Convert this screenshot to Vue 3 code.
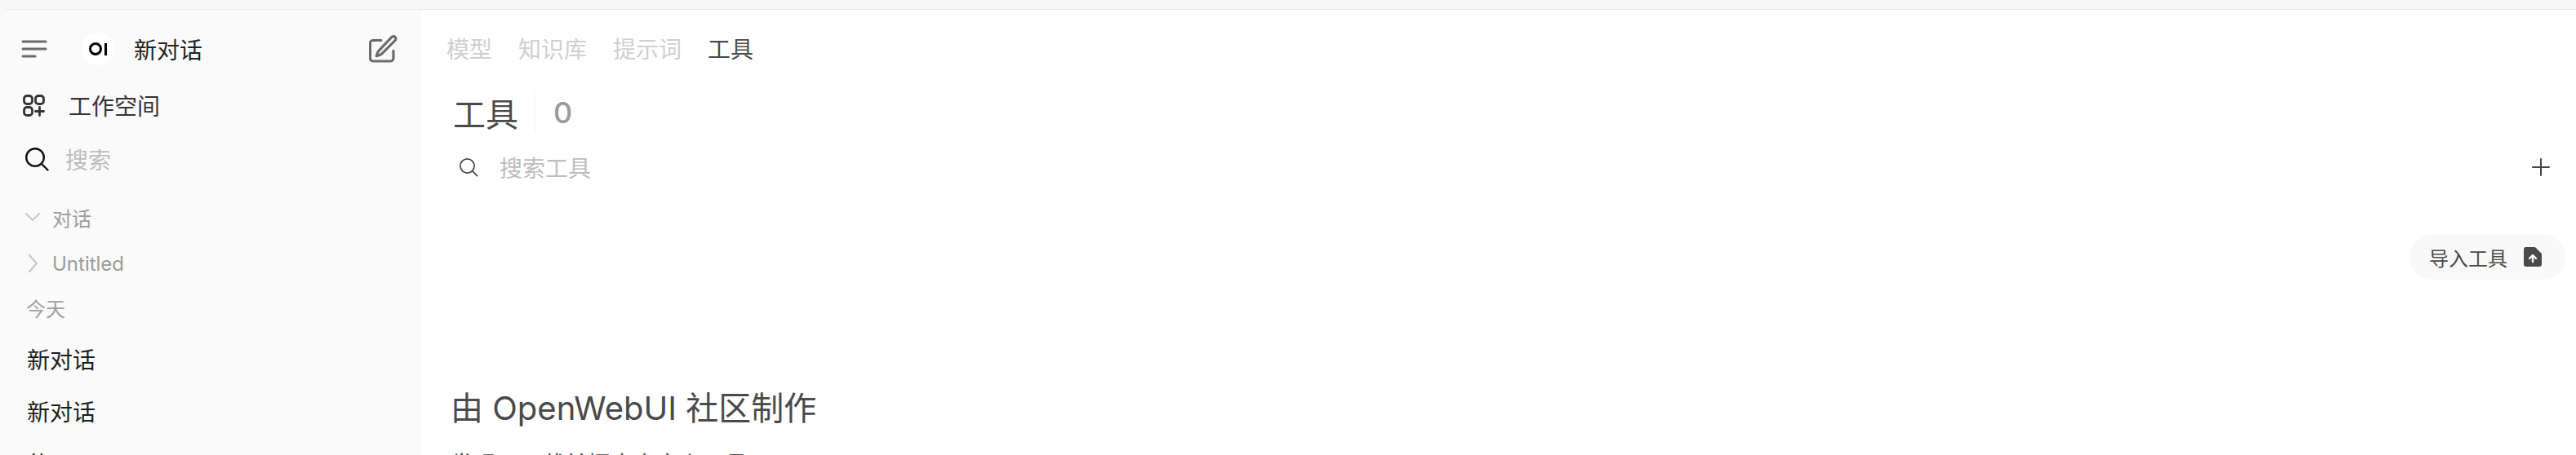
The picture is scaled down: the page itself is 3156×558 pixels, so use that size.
<template>
  <div class="window">
    <aside class="sidebar">
      <div class="top-row">
        <svg class="menu-icon" width="32" height="32" viewBox="0 0 32 32" fill="none" stroke="#6b6b6b" stroke-width="3" stroke-linecap="round">
          <path d="M2 7h28M2 16h28M2 25h15" />
        </svg>
        <div class="logo"><span class="logo-o"></span><span class="logo-i"></span></div>
        <span class="new-chat">新对话</span>
        <svg class="edit-icon" width="36" height="36" viewBox="0 0 24 24" fill="none" stroke="#6b6b6b" stroke-width="2.1" stroke-linecap="round" stroke-linejoin="round">
          <path d="M17.4 3.6l1.3-1.3a1.9 1.9 0 1 1 2.7 2.7L10.6 15.9a4.5 4.5 0 0 1-1.9 1.1L6.2 17.8l.8-2.5a4.5 4.5 0 0 1 1.1-1.9L17.4 3.6zM20 13.5v6.2a2.3 2.3 0 0 1-2.3 2.3H3.3A2.3 2.3 0 0 1 1 19.7V7.3A2.3 2.3 0 0 1 3.3 5H10" />
        </svg>
      </div>
      <div class="nav-row workspace">
        <svg width="27" height="27" viewBox="0 0 27 27" fill="none" stroke="#333" stroke-width="2.8" stroke-linecap="round">
          <rect x="1.5" y="1.5" width="10" height="10" rx="3.6" />
          <rect x="15.5" y="1.5" width="10" height="10" rx="3.6" />
          <rect x="1.5" y="15.5" width="10" height="10" rx="3.6" />
          <path d="M20.5 15.5v10M15.5 20.5h10" />
        </svg>
        <span>工作空间</span>
      </div>
      <div class="nav-row search">
        <svg width="30" height="30" viewBox="0 0 30 30" fill="none" stroke="#111" stroke-width="2.4" stroke-linecap="round">
          <circle cx="13" cy="13" r="10.8" />
          <path d="M21 21l7.5 7.5" />
        </svg>
        <span>搜索</span>
      </div>
      <div class="group-row chats">
        <svg width="20" height="20" viewBox="0 0 20 20" fill="none" stroke="#c8c8c8" stroke-width="2" stroke-linecap="round" stroke-linejoin="round">
          <path d="M2 6l8 8 8-8" />
        </svg>
        <span>对话</span>
      </div>
      <div class="group-row folder">
        <svg width="20" height="24" viewBox="0 0 20 24" fill="none" stroke="#c8c8c8" stroke-width="2.4" stroke-linecap="round" stroke-linejoin="round">
          <path d="M6 2l9 10-9 10" />
        </svg>
        <span>Untitled</span>
      </div>
      <div class="day">今天</div>
      <div v-for="(chat, i) in chats" :key="i" class="chat-item">{{ chat }}</div>
    </aside>

    <main class="content">
      <nav class="tabs">
        <span v-for="tab in tabs" :key="tab" class="tab" :class="{ active: tab === '工具' }">{{ tab }}</span>
      </nav>
      <div class="heading">
        <span class="title">工具</span>
        <span class="divider"></span>
        <span class="count">0</span>
      </div>
      <div class="search-bar">
        <svg width="24" height="24" viewBox="0 0 24 24" fill="none" stroke="#444" stroke-width="1.7" stroke-linecap="round">
          <circle cx="10.5" cy="10.5" r="8.6" />
          <path d="M16.6 16.6l6 6" />
        </svg>
        <span class="placeholder">搜索工具</span>
        <svg class="plus" width="22" height="22" viewBox="0 0 22 22" fill="none" stroke="#444" stroke-width="2" stroke-linecap="round">
          <path d="M11 1v20M1 11h20" />
        </svg>
      </div>
      <div class="actions">
        <button class="import-btn">
          <span>导入工具</span>
          <svg width="22" height="24" viewBox="0 0 22 24">
            <path fill="#4a4a4a" d="M3 0h10a2 2 0 0 1 1.4.6l6.9 7a2 2 0 0 1 .7 1.4v12a3 3 0 0 1-3 3H3a3 3 0 0 1-3-3V3a3 3 0 0 1 3-3z" />
            <path fill="none" stroke="#fff" stroke-width="2.4" stroke-linecap="round" stroke-linejoin="round" d="M11 18v-7M7 14l4-4 4 4" />
          </svg>
        </button>
      </div>
      <h2 class="community">由 OpenWebUI 社区制作</h2>
      <p class="cut-line">发现、下载并探索自定义工具</p>
    </main>
  </div>
</template>

<script setup>
const chats = ['新对话', '新对话', '使用 Python']
const tabs = ['模型', '知识库', '提示词', '工具']
</script>

<style>
html, body {
  margin: 0;
  height: 558px;
  overflow: hidden;
  background: #f7f7f7;
}
</style>

<style scoped>
.window {
  display: flex;
  width: 3156px;
  height: 547px;
  margin-top: 11px;
  border-top: 1px solid #e8e8e8;
  border-top-left-radius: 14px;
  box-sizing: border-box;
  overflow: hidden;
  background: #fff;
  font-family: Inter, "Noto Sans CJK SC", sans-serif;
}

.sidebar {
  width: 516px;
  flex: none;
  background: #fafafa;
  box-sizing: border-box;
  overflow: hidden;
}

.top-row {
  display: flex;
  align-items: center;
  height: 60px;
  margin-top: 18px;
  padding-left: 26px;
}

.logo {
  display: flex;
  align-items: center;
  justify-content: center;
  gap: 3px;
  width: 40px;
  height: 40px;
  margin-left: 42px;
  border-radius: 50%;
  background: #fff;
}

.logo-o {
  width: 10px;
  height: 10px;
  border: 3px solid #000;
  border-radius: 50%;
}

.logo-i {
  width: 3px;
  height: 15px;
  background: #000;
}

.new-chat {
  margin-left: 24px;
  font-size: 28px;
  color: #222;
}

.edit-icon {
  margin-left: auto;
  margin-right: 28px;
}

.nav-row {
  display: flex;
  align-items: center;
}

.workspace {
  height: 54px;
  margin-top: 12px;
  padding-left: 28px;
  gap: 29px;
  font-size: 28px;
  color: #333;
}

.search {
  height: 54px;
  margin-top: 12px;
  padding-left: 30px;
  gap: 20px;
  font-size: 28px;
  color: #bdbdbd;
}

.group-row {
  display: flex;
  align-items: center;
  font-size: 24px;
  color: #9c9c9c;
}

.chats {
  height: 40px;
  margin-top: 24px;
  padding-left: 30px;
  gap: 14px;
}

.folder {
  height: 40px;
  margin-top: 17px;
  padding-left: 30px;
  gap: 14px;
}

.day {
  margin-top: 17px;
  padding-left: 32px;
  font-size: 24px;
  line-height: 40px;
  color: #a0a0a0;
}

.chat-item {
  margin-top: 20px;
  padding-left: 33px;
  font-size: 28px;
  line-height: 44px;
  color: #1c1c1c;
}

.chat-item:first-of-type {
  margin-top: 15px;
}

.content {
  flex: 1;
  min-width: 0;
  overflow: hidden;
}

.tabs {
  display: flex;
  gap: 32px;
  height: 60px;
  margin-top: 17px;
  padding-left: 31px;
  align-items: center;
  font-size: 28px;
  color: #cfcfcf;
}

.tab.active {
  color: #4a4a4a;
}

.heading {
  display: flex;
  align-items: center;
  height: 50px;
  margin-top: 24px;
  padding-left: 39px;
}

.title {
  font-size: 40px;
  color: #4a4a4a;
}

.divider {
  width: 1px;
  height: 48px;
  margin: 0 22px 0 20px;
  background: #f2f2f2;
}

.count {
  font-size: 36px;
  font-weight: 500;
  color: #9a9a9a;
}

.search-bar {
  display: flex;
  align-items: center;
  height: 50px;
  margin-top: 17px;
  padding: 0 32px 0 46px;
  gap: 26px;
}

.placeholder {
  font-size: 28px;
  color: #bdbdbd;
}

.plus {
  margin-left: auto;
}

.actions {
  display: flex;
  justify-content: flex-end;
  margin-top: 57px;
  padding-right: 12px;
}

.import-btn {
  display: flex;
  align-items: center;
  gap: 20px;
  height: 56px;
  padding: 0 30px 0 24px;
  border: none;
  border-radius: 28px;
  background: #f9f9f9;
  font: inherit;
  font-size: 24px;
  color: #4a4a4a;
}

.community {
  margin: 131px 0 0;
  padding-left: 36px;
  font-size: 40px;
  font-weight: 400;
  line-height: 54px;
  color: #4a4a4a;
}

.cut-line {
  margin: 22px 0 0;
  padding-left: 36px;
  font-size: 28px;
  line-height: 40px;
  color: #4a4a4a;
}
</style>
